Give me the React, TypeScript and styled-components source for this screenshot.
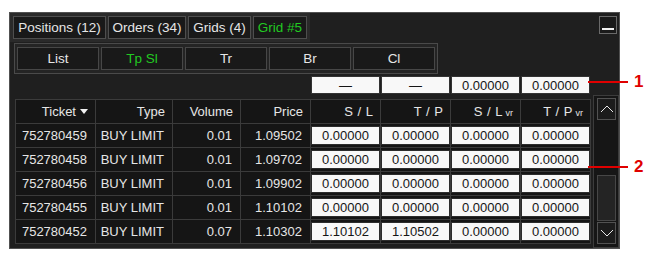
import * as React from 'react';
import styled, { createGlobalStyle } from 'styled-components';

const GlobalStyle = createGlobalStyle`
  html, body {
    margin: 0;
    background: #ffffff;
  }
  body {
    font-family: "Liberation Sans", Arial, sans-serif;
  }
`;

const COLUMNS = '79px 76px 67px 69px 69px 69px 69px 69px';
const GREEN = '#22c922';

interface ActiveProps {
  $active?: boolean,
}

interface WidthProps {
  $w: number,
}

interface ColProps {
  $col: number,
}

const Page = styled.div`
  position: relative;
  width: 656px;
  height: 256px;
  box-sizing: border-box;
  padding: 12px 0 0 9px;
`;

const Panel = styled.div`
  width: 611px;
  height: 237px;
  box-sizing: border-box;
  border: 1px solid #515151;
  background: #1f1f1f;
  display: flex;
  flex-direction: column;
  font-size: 13px;
  color: #e6e6e6;
`;

const TopBar = styled.div`
  display: flex;
  align-items: flex-start;
`;

const TabStrip = styled.div`
  display: flex;
  gap: 2px;
  height: 29px;
  box-sizing: border-box;
  padding: 3px;
  background: #2a2a2a;
`;

const Tab = styled.div<ActiveProps & WidthProps>`
  width: ${(props) => props.$w}px;
  height: 23px;
  box-sizing: border-box;
  border: 1px solid #4e4e4e;
  background: #191919;
  color: ${(props) => (props.$active ? GREEN : '#e6e6e6')};
  font-size: 13.5px;
  display: flex;
  align-items: center;
  justify-content: center;
`;

const MinButton = styled.div`
  margin: 3px 2px 0 auto;
  width: 18px;
  height: 18px;
  box-sizing: border-box;
  border: 1px solid #6a6a6a;
  background: #1a1a1a;
  display: flex;
  align-items: flex-end;
  justify-content: center;
  padding-bottom: 3px;

  &::after {
    content: '';
    width: 12px;
    height: 2px;
    background: #f2f2f2;
  }
`;

const SubGroup = styled.div`
  margin: 1px 0 0 4px;
  width: 424px;
  height: 31px;
  box-sizing: border-box;
  border: 1px solid #4a4a4a;
  background: #242424;
  display: flex;
  gap: 2px;
  padding: 3px 0 2px 2px;
`;

const SubButton = styled.div<ActiveProps>`
  flex: none;
  width: 82px;
  height: 23px;
  box-sizing: border-box;
  border: 1px solid #474747;
  background: #191919;
  color: ${(props) => (props.$active ? GREEN : '#e6e6e6')};
  font-size: 13.5px;
  display: flex;
  align-items: center;
  justify-content: center;
`;

const Lower = styled.div`
  display: flex;
  gap: 2px;
  padding-left: 5px;
`;

const LeftCol = styled.div`
  display: flex;
  flex-direction: column;
`;

const InputRow = styled.div`
  display: grid;
  grid-template-columns: ${COLUMNS};
  column-gap: 1px;
  padding: 0 1px;
  margin-top: 2px;
  height: 18px;
`;

const TopInput = styled.div<ColProps>`
  grid-column: ${(props) => props.$col};
  width: 69px;
  height: 18px;
  box-sizing: border-box;
  border: 1px solid #333333;
  background: #f8f8f8;
  color: #151515;
  display: flex;
  align-items: center;
  justify-content: center;
`;

const Grid = styled.div`
  margin-top: 5px;
  display: grid;
  grid-template-columns: ${COLUMNS};
  grid-auto-rows: 23px;
  gap: 1px;
  padding: 1px;
  background: #3b3b3b;
`;

const Cell = styled.div`
  background: #151515;
  display: flex;
  align-items: center;
  justify-content: flex-end;
  padding-right: 8px;
  white-space: nowrap;
`;

const HeadCell = styled(Cell)`
  padding-right: 7px;
  word-spacing: 1px;
`;

const Sub = styled.span`
  font-size: 9px;
  margin-left: 3px;
  margin-top: 3px;
`;

const SortArrow = styled.span`
  margin-left: 4px;
  width: 0;
  height: 0;
  border-left: 4px solid transparent;
  border-right: 4px solid transparent;
  border-top: 5px solid #f2f2f2;
`;

const InputCell = styled.div`
  background: #151515;
  display: flex;
  align-items: center;
`;

const CellInput = styled.div`
  width: 100%;
  height: 19px;
  box-sizing: border-box;
  border: 1px solid #2c2c2c;
  background: #f8f8f8;
  color: #151515;
  display: flex;
  align-items: center;
  justify-content: center;
`;

const ScrollBar = styled.div`
  margin-top: 21px;
  width: 26px;
  height: 153px;
  box-sizing: border-box;
  border: 1px solid #3c3c3c;
  background: #161616;
  padding: 2px 2px 3px 3px;
  display: flex;
  flex-direction: column;
`;

const ScrollButton = styled.div`
  height: 22px;
  box-sizing: border-box;
  border: 1px solid #525252;
  background: #1c1c1c;
  display: flex;
  align-items: center;
  justify-content: center;
`;

const Thumb = styled.div`
  margin-top: auto;
  margin-bottom: 1px;
  height: 46px;
  box-sizing: border-box;
  border: 1px solid #474747;
  background: #242424;
`;

const Callout = styled.div`
  position: absolute;
  left: 588px;
  display: flex;
  align-items: center;
  gap: 6px;
  color: #e00000;
  font-weight: bold;
  font-size: 17px;
  font-family: "Liberation Sans", Arial, sans-serif;

  &::before {
    content: '';
    width: 40px;
    height: 2px;
    background: #e00000;
  }
`;

const tabs = [
  { label: 'Positions (12)', w: 93 },
  { label: 'Orders (34)', w: 78 },
  { label: 'Grids (4)', w: 63 },
  { label: 'Grid #5', w: 54, active: true },
];

const subTabs = ['List', 'Tp Sl', 'Tr', 'Br', 'Cl'];

const rows = [
  { ticket: '752780459', volume: '0.01', price: '1.09502', sl: '0.00000', tp: '0.00000' },
  { ticket: '752780458', volume: '0.01', price: '1.09702', sl: '0.00000', tp: '0.00000' },
  { ticket: '752780456', volume: '0.01', price: '1.09902', sl: '0.00000', tp: '0.00000' },
  { ticket: '752780455', volume: '0.01', price: '1.10102', sl: '0.00000', tp: '0.00000' },
  { ticket: '752780452', volume: '0.07', price: '1.10302', sl: '1.10102', tp: '1.10502' },
];

function Chevron({ up }: { up: boolean }) {
  return (
    <svg width="14" height="8" viewBox="0 0 14 8">
      <polyline
        points={up ? '1,7 7,1 13,7' : '1,1 7,7 13,1'}
        fill="none"
        stroke="#e8e8e8"
        strokeWidth="1"
      />
    </svg>
  );
}

export default function App() {
  return (
    <Page>
      <GlobalStyle />
      <Panel>
        <TopBar>
          <TabStrip>
            {tabs.map((t) => (
              <Tab key={t.label} $w={t.w} $active={t.active}>{t.label}</Tab>
            ))}
          </TabStrip>
          <MinButton />
        </TopBar>
        <SubGroup>
          {subTabs.map((s) => (
            <SubButton key={s} $active={s === 'Tp Sl'}>{s}</SubButton>
          ))}
        </SubGroup>
        <Lower>
          <LeftCol>
            <InputRow>
              <TopInput $col={5}>—</TopInput>
              <TopInput $col={6}>—</TopInput>
              <TopInput $col={7}>0.00000</TopInput>
              <TopInput $col={8}>0.00000</TopInput>
            </InputRow>
            <Grid>
              <HeadCell>Ticket<SortArrow /></HeadCell>
              <HeadCell>Type</HeadCell>
              <HeadCell>Volume</HeadCell>
              <HeadCell>Price</HeadCell>
              <HeadCell>S / L</HeadCell>
              <HeadCell>T / P</HeadCell>
              <HeadCell>S / L<Sub>vr</Sub></HeadCell>
              <HeadCell>T / P<Sub>vr</Sub></HeadCell>
              {rows.map((r) => (
                <React.Fragment key={r.ticket}>
                  <Cell>{r.ticket}</Cell>
                  <Cell>BUY LIMIT</Cell>
                  <Cell>{r.volume}</Cell>
                  <Cell>{r.price}</Cell>
                  <InputCell><CellInput>{r.sl}</CellInput></InputCell>
                  <InputCell><CellInput>{r.tp}</CellInput></InputCell>
                  <InputCell><CellInput>0.00000</CellInput></InputCell>
                  <InputCell><CellInput>0.00000</CellInput></InputCell>
                </React.Fragment>
              ))}
            </Grid>
          </LeftCol>
          <ScrollBar>
            <ScrollButton><Chevron up /></ScrollButton>
            <Thumb />
            <ScrollButton><Chevron up={false} /></ScrollButton>
          </ScrollBar>
        </Lower>
      </Panel>
      <Callout style={{ top: 72 }}>1</Callout>
      <Callout style={{ top: 157 }}>2</Callout>
    </Page>
  );
}
